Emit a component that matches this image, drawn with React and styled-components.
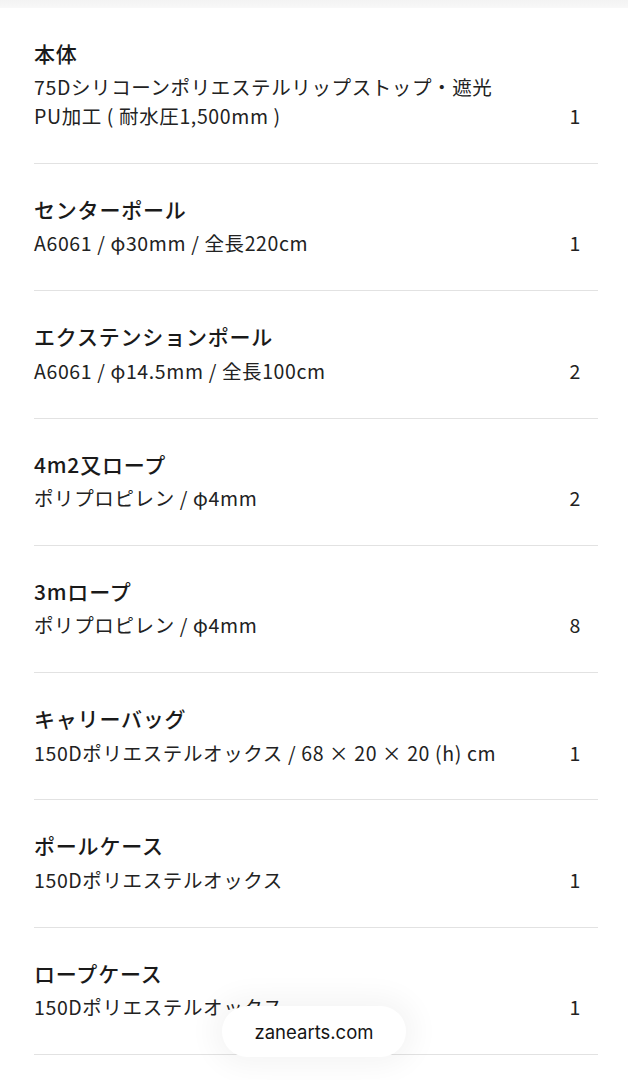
import React from "react";
import styled, { createGlobalStyle } from "styled-components";

const Global = createGlobalStyle`
  html, body { margin: 0; padding: 0; background: #ffffff; }
  body {
    font-family: "Noto Sans CJK JP", "Noto Sans", sans-serif;
    color: #1c1c1c;
    -webkit-font-smoothing: antialiased;
  }
`;

const Page = styled.div`
  position: relative;
  width: 628px;
  min-height: 1080px;
  overflow: hidden;
  background: #fff;
`;

const TopShade = styled.div`
  height: 7.7px;
  background: linear-gradient(#f3f3f3, #f8f8f8);
`;

const List = styled.ul`
  list-style: none;
  margin: 0 30px 0 34px;
  padding: 0;
`;

const Row = styled.li`
  display: grid;
  grid-template-columns: 1fr 46px;
  align-items: end;
  padding: 30px 0 32.8px;
  border-bottom: 1.5px solid #e2e2e2;
`;

const Info = styled.div`
  display: flex;
  flex-direction: column;
  gap: 4.5px;
`;

const Name = styled.div`
  font-size: 21px;
  font-weight: 500;
  line-height: 30px;
  letter-spacing: 0.8px;
  color: #1a1a1a;
`;

const Spec = styled.div`
  font-size: 19.5px;
  line-height: 29px;
  letter-spacing: 0.62px;
  color: #222;
  white-space: pre-line;
`;

const Qty = styled.div`
  font-size: 19.5px;
  line-height: 29px;
  text-align: center;
  color: #222;
`;

const UrlPill = styled.div`
  position: absolute;
  left: 50%;
  bottom: 23px;
  transform: translateX(-50%);
  width: 184px;
  height: 51px;
  border-radius: 25.5px;
  background: #fff;
  box-shadow: 0 0 28px 10px rgba(0, 0, 0, 0.045);
  display: flex;
  align-items: center;
  justify-content: center;
  font-family: Inter, Roboto, "Liberation Sans", sans-serif;
  font-size: 18.5px;
  color: #141414;
`;

const items = [
  { name: "本体", spec: "75Dシリコーンポリエステルリップストップ・遮光\nPU加工 ( 耐水圧1,500mm )", qty: 1 },
  { name: "センターポール", spec: "A6061 / φ30mm / 全長220cm", qty: 1 },
  { name: "エクステンションポール", spec: "A6061 / φ14.5mm / 全長100cm", qty: 2 },
  { name: "4m2又ロープ", spec: "ポリプロピレン / φ4mm", qty: 2 },
  { name: "3mロープ", spec: "ポリプロピレン / φ4mm", qty: 8 },
  { name: "キャリーバッグ", spec: "150Dポリエステルオックス / 68 × 20 × 20 (h) cm", qty: 1 },
  { name: "ポールケース", spec: "150Dポリエステルオックス", qty: 1 },
  { name: "ロープケース", spec: "150Dポリエステルオックス", qty: 1 },
];

export default function App() {
  return (
    <Page>
      <Global />
      <TopShade />
      <List>
        {items.map((it) => (
          <Row key={it.name}>
            <Info>
              <Name>{it.name}</Name>
              <Spec>{it.spec}</Spec>
            </Info>
            <Qty>{it.qty}</Qty>
          </Row>
        ))}
      </List>
      <UrlPill>zanearts.com</UrlPill>
    </Page>
  );
}
